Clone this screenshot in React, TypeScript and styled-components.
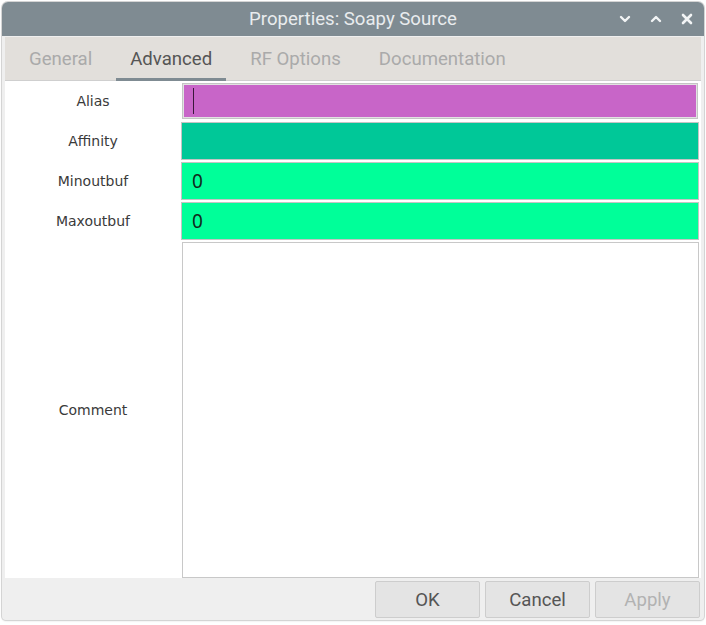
import React from "react";
import styled, { createGlobalStyle } from "styled-components";

const Global = createGlobalStyle`
  html, body { margin: 0; padding: 0; background: #ffffff; }
  body { width: 706px; height: 625px; overflow: hidden; }
`;

const Desktop = styled.div`
  width: 706px;
  height: 625px;
  padding: 2px 2px 0 2px;
  box-sizing: border-box;
  background: #ffffff;
`;

const Window = styled.div`
  width: 702px;
  height: 618px;
  display: flex;
  flex-direction: column;
  background: #efefef;
  border-radius: 6px 6px 4px 4px;
  box-shadow: 0 0 0 1px #d4d4d4, 0 1px 2px rgba(0, 0, 0, 0.15);
  overflow: hidden;
`;

const TitleBar = styled.div`
  height: 34px;
  flex: none;
  background: #7f8b92;
  display: flex;
  align-items: center;
  justify-content: center;
  position: relative;
  font-family: Roboto, "Liberation Sans", sans-serif;
  font-size: 18.6px;
  color: #e9ecee;
`;

const TitleControls = styled.div`
  position: absolute;
  right: 11px;
  top: 0;
  height: 34px;
  display: flex;
  align-items: center;
  gap: 19px;
`;

const Frame = styled.div`
  flex: 1;
  display: flex;
  flex-direction: column;
  padding: 1px 3px 0 3px;
  min-height: 0;
`;

const TabBar = styled.div`
  height: 43px;
  flex: none;
  background: #e2dfdb;
  display: flex;
  align-items: stretch;
  gap: 10px;
  padding-left: 10px;
  border-bottom: 1px solid #cfcfcf;
`;

const Tab = styled.div<{ $active?: boolean }>`
  padding: 3px 14px 0 14px;
  display: flex;
  align-items: center;
  font-family: Roboto, "Liberation Sans", sans-serif;
  font-size: 18.6px;
  color: ${(p) => (p.$active ? "#555555" : "#aaaaaa")};
  border-bottom: 3px solid ${(p) => (p.$active ? "#7f8b92" : "transparent")};
  margin-bottom: -1px;
`;

const Content = styled.div`
  flex: 1;
  background: #ffffff;
  display: grid;
  grid-template-columns: 176px 1fr;
  grid-template-rows: 38px 38px 38px 38px 1fr;
  row-gap: 2px;
  padding: 1px 2px 0 0;
  min-height: 0;
`;

const Label = styled.div`
  display: flex;
  align-items: center;
  justify-content: center;
  font-family: "DejaVu Sans", sans-serif;
  font-size: 14px;
  color: #3a3a3a;
`;

const Field = styled.div<{ $bg: string; $focused?: boolean }>`
  background: ${(p) => p.$bg};
  border: 1px solid #c4c4c4;
  box-shadow: ${(p) => (p.$focused ? "inset 0 0 0 1px #e2e2e2" : "none")};
  margin: ${(p) => (p.$focused ? "1px 1px 1px 1px" : "0")};
  display: flex;
  align-items: center;
  padding-left: 10px;
  font-family: "Noto Sans", "DejaVu Sans", sans-serif;
  font-size: 19px;
  color: #102a1c;
`;

const Caret = styled.span`
  display: block;
  width: 1px;
  height: 26px;
  background: #3a173a;
`;

const TextArea = styled.div`
  background: #ffffff;
  border: 1px solid #c8c8c8;
  margin-left: 1px;
`;

const Footer = styled.div`
  height: 42px;
  flex: none;
  display: flex;
  justify-content: flex-end;
  align-items: flex-start;
  gap: 5px;
  padding: 3px 1px 0 0;
  box-sizing: border-box;
`;

const Button = styled.div<{ $disabled?: boolean }>`
  width: 105px;
  height: 37px;
  box-sizing: border-box;
  background: #e4e4e4;
  border: 1px solid #cdcdcd;
  border-radius: 2px;
  display: flex;
  align-items: center;
  justify-content: center;
  font-family: Roboto, "Liberation Sans", sans-serif;
  font-size: 18.6px;
  color: ${(p) => (p.$disabled ? "#b2b2b2" : "#555555")};
`;

const Icon = ({ kind }: { kind: "down" | "up" | "close" }) => (
  <svg width="12" height="12" viewBox="0 0 12 12">
    {kind === "down" && (
      <path d="M2 4 L6 8 L10 4" fill="none" stroke="#f2f4f5" strokeWidth="2.4" strokeLinecap="round" strokeLinejoin="round" />
    )}
    {kind === "up" && (
      <path d="M2 8 L6 4 L10 8" fill="none" stroke="#f2f4f5" strokeWidth="2.4" strokeLinecap="round" strokeLinejoin="round" />
    )}
    {kind === "close" && (
      <path d="M2 2 L10 10 M10 2 L2 10" fill="none" stroke="#f2f4f5" strokeWidth="2.6" strokeLinecap="round" />
    )}
  </svg>
);

const rows = [
  { label: "Alias", bg: "#c865c8", value: null, focused: true },
  { label: "Affinity", bg: "#00c898", value: "" },
  { label: "Minoutbuf", bg: "#00ff99", value: "0" },
  { label: "Maxoutbuf", bg: "#00ff99", value: "0" },
];

export default function App() {
  return (
    <>
      <Global />
      <Desktop>
        <Window>
          <TitleBar>
            Properties: Soapy Source
            <TitleControls>
              <Icon kind="down" />
              <Icon kind="up" />
              <Icon kind="close" />
            </TitleControls>
          </TitleBar>
          <Frame>
            <TabBar>
              <Tab>General</Tab>
              <Tab $active>Advanced</Tab>
              <Tab>RF Options</Tab>
              <Tab>Documentation</Tab>
            </TabBar>
            <Content>
              {rows.map((r) => (
                <React.Fragment key={r.label}>
                  <Label>{r.label}</Label>
                  <Field $bg={r.bg} $focused={r.focused}>
                    {r.value === null ? <Caret /> : r.value}
                  </Field>
                </React.Fragment>
              ))}
              <Label>Comment</Label>
              <TextArea />
            </Content>
            <Footer>
              <Button>OK</Button>
              <Button>Cancel</Button>
              <Button $disabled>Apply</Button>
            </Footer>
          </Frame>
        </Window>
      </Desktop>
    </>
  );
}
